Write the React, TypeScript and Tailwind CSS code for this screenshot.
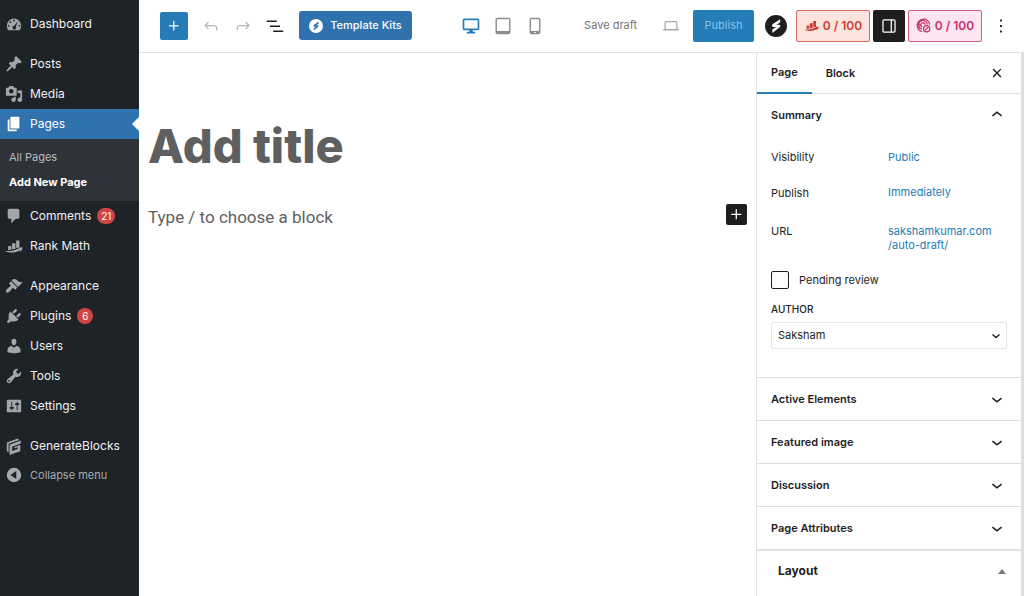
import type { ReactNode } from "react";
import clsx from "clsx";

type IconProps = {
  className?: string;
  children: ReactNode;
  box?: string;
};

function Icon({ className, children, box = "0 0 24 24" }: IconProps) {
  return (
    <svg
      viewBox={box}
      fill="currentColor"
      aria-hidden="true"
      className={clsx("shrink-0", className)}
    >
      {children}
    </svg>
  );
}

const dashicons = {
  dashboard:
    "M3.76 17h12.48A7.96 7.96 0 0 0 18 12a8 8 0 1 0-16 0c0 1.89.66 3.63 1.76 5zM10 5a1 1 0 1 1 0 2 1 1 0 0 1 0-2zM6 7a1 1 0 1 1 0 2 1 1 0 0 1 0-2zm8.600-.3L12 12.800a2 2 0 1 1-1.600-.8zM4 11a1 1 0 1 1 0 2 1 1 0 0 1 0-2zm12 0a1 1 0 1 1 0 2 1 1 0 0 1 0-2z",
  posts:
    "M10.44 3.02l1.82-1.82 6.36 6.35-1.83 1.82c-1.05-.68-2.48-.57-3.41.36l-.75.75c-.92.93-1.04 2.35-.35 3.41l-1.83 1.82-2.41-2.41-2.8 2.79c-.42.42-3.38 2.71-3.8 2.29s1.86-3.39 2.28-3.81l2.79-2.79L4.1 9.36l1.83-1.82c1.05.69 2.48.57 3.4-.36l.75-.75c.93-.92 1.05-2.35.36-3.41z",
  media:
    "M13 11V4c0-.55-.45-1-1-1h-1.67L9 1H5L3.67 3H2c-.55 0-1 .45-1 1v7c0 .55.45 1 1 1h10c.55 0 1-.45 1-1zM7 4.5c1.38 0 2.5 1.12 2.5 2.5S8.38 9.5 7 9.5 4.5 8.38 4.5 7 5.62 4.5 7 4.5zM14 6h5v10.5c0 1.38-1.12 2.5-2.5 2.5S14 17.88 14 16.5s1.12-2.5 2.5-2.5c.17 0 .34.02.5.05V9h-3V6zm-4 8.05V13h2v3.5c0 1.38-1.12 2.5-2.5 2.5S7 17.88 7 16.5 8.12 14 9.5 14c.17 0 .34.02.5.05z",
  pages: "M6 15V2h10v13H6zm-1 1h8v2H3V5h2v11z",
  comments:
    "M5 2h9c1.1 0 2 .9 2 2v7c0 1.1-.9 2-2 2h-2l-5 5v-5H5c-1.1 0-2-.9-2-2V4c0-1.1.9-2 2-2z",
  rankMath:
    "M3.500 10H7v4l-3.500.7zM7.800 7h3.800v6l-3.800 1zM12.400 4H16v7l-3.600 1.500zM0 15.600c6 .4 11-.6 15.200-2.800l-.8-1.300 5.600.2-2.600 4.600-.9-1.300C12 17.600 6 18.200 0 15.600z",
  appearance:
    "M14.48 11.06L7.41 3.99l1.5-1.5c.5-.56 2.3-.47 3.51.32 1.21.8 1.43 1.28 2.91 2.1 1.18.64 2.45 1.26 4.45.85zm-.71.71L6.7 4.7 4.93 6.47c-.39.39-.39 1.02 0 1.41l1.06 1.06c.39.39.39 1.03 0 1.42-.6.6-1.43 1.11-2.21 1.69-.35.26-.7.53-1.01.84C1.43 14.23.4 16.08 1.4 17.07c.99 1 2.84-.03 4.18-1.36.31-.31.58-.66.85-1.02.57-.78 1.08-1.61 1.69-2.21.39-.39 1.02-.39 1.41 0l1.06 1.06c.39.39 1.02.39 1.41 0z",
  plugins:
    "M13.11 4.36L9.87 7.6 8 5.73l3.24-3.24c.35-.34 1.05-.2 1.56.32.52.51.66 1.21.31 1.55zm-8 1.77l.91-1.12 9.01 9.01-1.19.84c-.71.71-2.63 1.16-3.82 1.16H6.14L4.9 17.26c-.59.59-1.54.59-2.12 0-.59-.58-.59-1.53 0-2.12l1.24-1.24v-3.88c0-1.13.4-3.19 1.09-3.89zm7.26 3.97l3.24-3.24c.34-.35 1.04-.21 1.55.31.52.51.66 1.21.31 1.55l-3.24 3.25z",
  users:
    "M10 9.25c-2.27 0-2.73-3.44-2.73-3.44C7 4.02 7.82 2 9.97 2c2.16 0 2.98 2.02 2.71 3.81 0 0-.41 3.44-2.68 3.44zm0 2.57L12.72 10c2.39 0 4.52 2.33 4.52 4.53v2.49s-3.65 1.13-7.24 1.13c-3.65 0-7.24-1.13-7.24-1.13v-2.49c0-2.25 1.94-4.48 4.47-4.48z",
  tools:
    "M16.68 9.77c-1.34 1.34-3.3 1.67-4.95.99l-5.41 6.52c-.99.99-2.59.99-3.58 0s-.99-2.59 0-3.57l6.52-5.42c-.68-1.65-.35-3.61.99-4.95 1.28-1.28 3.12-1.62 4.72-1.06l-2.89 2.89 2.82 2.82 2.86-2.87c.53 1.58.18 3.39-1.08 4.65zM3.81 16.21c.4.39 1.04.39 1.43 0 .4-.4.4-1.04 0-1.43-.39-.4-1.03-.4-1.43 0-.39.39-.39 1.03 0 1.43z",
  settings:
    "M18 16V4c0-.55-.45-1-1-1H3c-.55 0-1 .45-1 1v12c0 .55.45 1 1 1h14c.55 0 1-.45 1-1zM8 11h1c.55 0 1 .45 1 1s-.45 1-1 1H8v1.500c0 .28-.22.5-.5.5s-.5-.22-.5-.5V13H6c-.55 0-1-.45-1-1s.45-1 1-1h1V5.500c0-.28.22-.5.5-.5s.5.22.5.5V11zm5-2h-1c-.55 0-1-.45-1-1s.45-1 1-1h1V5.500c0-.28.22-.5.5-.5s.5.22.5.5V7h1c.55 0 1 .45 1 1s-.45 1-1 1h-1v5.500c0 .28-.22.5-.5.5s-.5-.22-.5-.5V9z",
  generate:
    "M2 6L15 1.500v2L4 7.500V17l-2-1.200zM5 8.500L17.500 4v3.300L8 10.800v4.700l6-2.200v-1.800l-3.500 1.300v-1.600L17 8.800v7L5 20z",
  collapse:
    "M10 2a8 8 0 1 0 0 16 8 8 0 0 0 0-16zm2.500 12.500L6 10l6.500-4.500z",
};

type MenuItem = {
  label: string;
  icon: keyof typeof dashicons;
  count?: number;
  active?: boolean;
  children?: { label: string; current?: boolean }[];
};

const menuGroups: MenuItem[][] = [
  [{ label: "Dashboard", icon: "dashboard" }],
  [
    { label: "Posts", icon: "posts" },
    { label: "Media", icon: "media" },
    {
      label: "Pages",
      icon: "pages",
      active: true,
      children: [
        { label: "All Pages" },
        { label: "Add New Page", current: true },
      ],
    },
    { label: "Comments", icon: "comments", count: 21 },
    { label: "Rank Math", icon: "rankMath" },
  ],
  [
    { label: "Appearance", icon: "appearance" },
    { label: "Plugins", icon: "plugins", count: 6 },
    { label: "Users", icon: "users" },
    { label: "Tools", icon: "tools" },
    { label: "Settings", icon: "settings" },
  ],
];

function MenuIcon({ name }: { name: keyof typeof dashicons }) {
  return (
    <Icon box="0 0 20 20" className="size-[18px]">
      <path fillRule="evenodd" d={dashicons[name]} />
    </Icon>
  );
}

function AdminMenuItem({ item }: { item: MenuItem }) {
  return (
    <li>
      <a
        href="#"
        className={clsx(
          "relative flex h-[30px] items-center gap-[7px] pl-[5px]",
          item.active ? "bg-[#2f72ae] text-white" : "text-[#f0f0f1]",
        )}
      >
        <span className={item.active ? "text-white" : "text-[#a2a6ab]"}>
          <MenuIcon name={item.icon} />
        </span>
        {item.label}
        {item.count ? (
          <span className="-ml-px flex h-4 min-w-4 items-center justify-center rounded-full bg-[#d04543] px-1 text-[10px] text-white">
            {item.count}
          </span>
        ) : null}
        {item.active ? (
          <span className="absolute right-0 border-y-[7px] border-r-[7px] border-y-transparent border-r-white" />
        ) : null}
      </a>
      {item.children ? (
        <ul className="bg-[#2e333a] py-[6px] text-[11px]">
          {item.children.map((child) => (
            <li key={child.label}>
              <a
                href="#"
                className={clsx(
                  "flex h-[25px] items-center pl-[9px]",
                  child.current ? "font-bold text-white" : "text-[#b6babf]",
                )}
              >
                {child.label}
              </a>
            </li>
          ))}
        </ul>
      ) : null}
    </li>
  );
}

function AdminMenu() {
  return (
    <nav
      aria-label="Main menu"
      className="w-[139px] shrink-0 bg-[#1e2328] pt-[9px] text-[12px]"
    >
      <div className="flex flex-col gap-[10px]">
        {menuGroups.map((group) => (
          <ul key={group[0].label}>
            {group.map((item) => (
              <AdminMenuItem key={item.label} item={item} />
            ))}
          </ul>
        ))}
        <ul>
          <AdminMenuItem item={{ label: "GenerateBlocks", icon: "generate" }} />
          <li>
            <button
              type="button"
              className="flex h-[28px] w-full items-center gap-[7px] pl-[5px] text-[11px] text-[#a7aaad]"
            >
              <MenuIcon name="collapse" />
              Collapse menu
            </button>
          </li>
        </ul>
      </div>
    </nav>
  );
}

function StarterLogo({ className }: { className?: string }) {
  return (
    <Icon className={className}>
      <path
        fillRule="evenodd"
        d="M12 0a12 12 0 1 0 0 24 12 12 0 0 0 0-24zm4.500 4.500v3.700l-4.300 2.300h3c1.700 0 2.200 1.700.8 2.800L8 19.500v-3.700l4.200-2.700H9.300c-1.900 0-2.400-2-.8-3.200z"
      />
    </Icon>
  );
}

function EditorHeader() {
  return (
    <header className="flex h-[53px] shrink-0 items-center justify-between border-b border-[#e2e2e2] pr-[13px] pb-px pl-[21px] text-[11px] text-[#1e1e1e]">
      <div className="flex items-center gap-2">
        <button
          type="button"
          aria-label="Toggle block inserter"
          className="flex size-7 items-center justify-center rounded-[2px] bg-[#267cb6] text-white"
        >
          <Icon className="size-5">
            <path d="M11 12.500V17.500H12.500V12.500H17.500V11H12.500V6H11V11H6V12.500H11Z" />
          </Icon>
        </button>
        <button
          type="button"
          aria-label="Undo"
          className="ml-[3px] flex w-6 justify-center text-[#b5b5b5]"
        >
          <Icon className="size-5">
            <path d="M18.300 11.700c-.6-.6-1.400-.9-2.300-.9H6.700l2.900-3.300-1.100-1-4.500 5L8.500 16l1-1-2.700-2.700H16c.5 0 .9.2 1.300.5 1 1 1 3.400 1 4.500v.3h1.500v-.2c0-1.500 0-4.300-1.500-5.700z" />
          </Icon>
        </button>
        <button
          type="button"
          aria-label="Redo"
          className="flex w-6 justify-center text-[#b5b5b5]"
        >
          <Icon className="size-5">
            <path d="M15.600 6.500l-1.100 1 2.900 3.300H8c-.9 0-1.700.3-2.300.9-1.400 1.500-1.400 4.200-1.400 5.600v.2h1.500v-.3c0-1.100 0-3.500 1-4.500.3-.3.7-.5 1.300-.5h9.200L14.500 15l1.100 1.100 4.600-4.600-4.600-5z" />
          </Icon>
        </button>
        <button
          type="button"
          aria-label="Document overview"
          className="flex w-6 justify-center"
        >
          <Icon className="size-[22px]">
            <path d="M3 6h11v1.500H3V6Zm3.500 5.500h11V13h-11v-1.500ZM21 17H10v1.500h11V17Z" />
          </Icon>
        </button>
        <button
          type="button"
          className="ml-1 flex h-[29px] w-[113px] items-center justify-center gap-[7px] rounded-[3px] bg-[#2f72ae] font-medium whitespace-nowrap text-white"
        >
          <StarterLogo className="size-[14px]" />
          Template Kits
        </button>
      </div>

      <div className="ml-[10px] flex items-center gap-3">
        <button type="button" aria-label="Desktop" className="text-[#267cb6]">
          <Icon className="size-5">
            <path
              fillRule="evenodd"
              d="M4 3h16a2 2 0 0 1 2 2v10a2 2 0 0 1-2 2h-6v2h3v2H7v-2h3v-2H4a2 2 0 0 1-2-2V5a2 2 0 0 1 2-2zm0 2v10h16V5z"
            />
          </Icon>
        </button>
        <button type="button" aria-label="Tablet" className="text-[#8c8c8c]">
          <Icon className="size-5">
            <path
              fillRule="evenodd"
              d="M5.500 2h13A2.500 2.500 0 0 1 21 4.500v15a2.500 2.500 0 0 1-2.500 2.500h-13A2.500 2.500 0 0 1 3 19.500v-15A2.500 2.500 0 0 1 5.500 2zm-.8 2v14h14.600V4z"
            />
          </Icon>
        </button>
        <button type="button" aria-label="Mobile" className="text-[#8c8c8c]">
          <Icon className="size-5">
            <path
              fillRule="evenodd"
              d="M8 2h8a2.500 2.500 0 0 1 2.500 2.500v15A2.500 2.500 0 0 1 16 22H8a2.500 2.500 0 0 1-2.500-2.500v-15A2.500 2.500 0 0 1 8 2zm-.8 2v14h9.600V4zM11 19.200v1.200h2v-1.200z"
            />
          </Icon>
        </button>
      </div>

      <div className="flex items-center gap-[3px]">
        <button
          type="button"
          className="mr-[21px] whitespace-nowrap text-[#757575]"
        >
          Save draft
        </button>
        <button
          type="button"
          aria-label="Preview"
          className="mr-[9px] text-[#a8a8a8]"
        >
          <Icon className="size-5">
            <path
              fillRule="evenodd"
              d="M20.500 16h-.7V8c0-1.100-.9-2-2-2H6.200c-1.100 0-2 .9-2 2v8h-.7c-.8 0-1.500.7-1.500 1.500h20c0-.8-.7-1.500-1.500-1.500zM5.700 8c0-.3.2-.5.5-.5h11.600c.3 0 .5.2.5.5v7.600H5.700V8z"
            />
          </Icon>
        </button>
        <button
          type="button"
          className="h-8 w-[61px] rounded-[2px] bg-[#267cb6] text-[#84c0e8]"
        >
          Publish
        </button>
        <button
          type="button"
          aria-label="Starter templates"
          className="mr-[6px] ml-2"
        >
          <StarterLogo className="size-[22px]" />
        </button>
        <button
          type="button"
          className="flex h-8 w-[74px] items-center justify-center gap-1 rounded-[2px] border border-[#cf6a67] bg-[#fde3de] text-[12px] font-semibold whitespace-nowrap text-[#c93b35]"
        >
          <Icon box="0 0 20 20" className="size-[15px]">
            <path d={dashicons.rankMath} />
          </Icon>
          0 / 100
        </button>
        <button
          type="button"
          aria-label="Settings"
          className="flex h-8 w-8 items-center justify-center rounded-[2px] bg-[#1e1e1e] text-white"
        >
          <Icon className="size-5">
            <path
              fillRule="evenodd"
              d="M18 4H6c-1.100 0-2 .9-2 2v12c0 1.100.9 2 2 2h12c1.100 0 2-.9 2-2V6c0-1.100-.9-2-2-2zm-4 14.500H6c-.3 0-.5-.2-.5-.5V6c0-.3.2-.5.5-.5h8v13zm4.500-.5c0 .3-.2.5-.5.5h-2.500v-13H18c.3 0 .5.2.5.5v12z"
            />
          </Icon>
        </button>
        <button
          type="button"
          className="flex h-8 w-[74px] items-center justify-center gap-1 rounded-[2px] border border-[#c9608d] bg-[#fde5f1] text-[12px] font-semibold whitespace-nowrap text-[#c62f6d]"
        >
          <svg
            viewBox="0 0 24 24"
            fill="none"
            stroke="currentColor"
            strokeWidth="2"
            strokeLinecap="round"
            aria-hidden="true"
            className="size-[15px] shrink-0"
          >
            <path d="M9 21.500A10 10 0 1 1 21.800 10M8.500 17.500A7 7 0 1 1 18 9.500M9 14a3.500 3.500 0 1 1 5.500-4M2 11h5M3 16h4" />
            <circle cx="17" cy="17" r="5" />
            <path d="M15 19l4-4" />
          </svg>
          0 / 100
        </button>
        <button
          type="button"
          aria-label="Options"
          className="ml-[6px] flex w-5 justify-center"
        >
          <Icon className="size-[22px]">
            <path d="M13 19h-2v-2h2v2zm0-6h-2v-2h2v2zm0-6h-2V5h2v2z" />
          </Icon>
        </button>
      </div>
    </header>
  );
}

function Chevron({ up }: { up?: boolean }) {
  return (
    <Icon className="size-[22px]">
      <path
        d={
          up
            ? "M6.500 12.400L12 8l5.500 4.400-.9 1.200L12 10l-4.500 3.600-1-1.200z"
            : "M17.500 11.600L12 16l-5.500-4.400.9-1.200L12 14l4.500-3.600 1 1.200z"
        }
      />
    </Icon>
  );
}

function PanelToggle({ label, open }: { label: string; open?: boolean }) {
  return (
    <button
      type="button"
      aria-expanded={Boolean(open)}
      className="flex h-[42px] w-full items-center justify-between pr-[13px] pl-[14px] font-semibold"
    >
      {label}
      <Chevron up={open} />
    </button>
  );
}

const closedPanels = [
  "Active Elements",
  "Featured image",
  "Discussion",
  "Page Attributes",
];

function SettingsSidebar() {
  return (
    <aside className="w-[268px] shrink-0 overflow-hidden border-r-[3px] border-l border-r-[#dedede] border-l-[#e2e2e2] text-[11px] text-[#1e1e1e]">
      <div className="flex h-[41px] items-center justify-between border-b border-[#e2e2e2] pr-[13px]">
        <div role="tablist" className="flex h-full font-semibold">
          <button
            type="button"
            role="tab"
            aria-selected="true"
            className="-mb-px border-b-2 border-[#267cb6] px-[14px]"
          >
            Page
          </button>
          <button
            type="button"
            role="tab"
            aria-selected="false"
            className="px-[14px]"
          >
            Block
          </button>
        </div>
        <button type="button" aria-label="Close settings">
          <Icon className="size-[22px]">
            <path d="M12 13.060l3.712 3.713 1.061-1.060L13.061 12l3.712-3.712-1.060-1.060L12 10.938 8.288 7.227l-1.061 1.060L10.939 12l-3.712 3.712 1.060 1.061L12 13.061z" />
          </Icon>
        </button>
      </div>

      <section className="pb-7">
        <PanelToggle label="Summary" open />
        <div className="px-[14px]">
          <dl className="grid grid-cols-[117px_1fr] leading-[14px]">
            <dt className="py-[14px]">Visibility</dt>
            <dd className="py-[14px]">
              <button type="button" className="text-[#267cb6]">
                Public
              </button>
            </dd>
            <dt className="py-2">Publish</dt>
            <dd className="py-[7px]">
              <button type="button" className="text-[#267cb6]">
                Immediately
              </button>
            </dd>
            <dt className="pt-4">URL</dt>
            <dd className="pt-4">
              <a href="#" className="block text-[#267cb6]">
                sakshamkumar.com
                <br />
                /auto-draft/
              </a>
            </dd>
          </dl>
          <label className="mt-[19px] flex h-[18px] items-center gap-[10px]">
            <input
              type="checkbox"
              className="size-[18px] appearance-none rounded-[2px] border border-[#1e1e1e] bg-white"
            />
            Pending review
          </label>
          <label
            htmlFor="author"
            className="mt-[13px] block text-[10px] leading-[14px] font-medium"
          >
            AUTHOR
          </label>
          <div className="relative mt-[6px] flex items-center">
            <select
              id="author"
              className="h-[27px] w-full appearance-none rounded-[2px] border border-[#e6e6e6] bg-white px-[6px]"
            >
              <option>Saksham</option>
            </select>
            <svg
              viewBox="0 0 10 10"
              fill="none"
              stroke="currentColor"
              strokeWidth="1.4"
              aria-hidden="true"
              className="pointer-events-none absolute right-[6px] size-[10px]"
            >
              <path d="M1.500 3.500L5 6.500l3.500-3" />
            </svg>
          </div>
        </div>
      </section>

      {closedPanels.map((label) => (
        <section key={label} className="border-t border-[#dedede]">
          <PanelToggle label={label} />
        </section>
      ))}

      <section className="border-t-2 border-[#e0e0e0]">
        <button
          type="button"
          aria-expanded="true"
          className="flex h-10 w-full items-center justify-between pr-[15px] pl-[21px] text-[12px] font-bold"
        >
          Layout
          <span className="border-x-4 border-b-[5px] border-x-transparent border-b-[#787c82]" />
        </button>
      </section>
    </aside>
  );
}

function EditorCanvas() {
  return (
    <main className="min-w-0 flex-1 px-[9px] pt-[63px] text-[#5f5f5f]">
      <input
        type="text"
        aria-label="Add title"
        placeholder="Add title"
        className="block h-[60px] w-full text-[47px] font-extrabold outline-none placeholder:text-[#5f5f5f]"
      />
      <div className="mt-7 flex items-start justify-between">
        <input
          type="text"
          aria-label="Add default block"
          placeholder="Type / to choose a block"
          className="h-[26px] min-w-0 flex-1 font-['Roboto','Liberation_Sans',sans-serif] text-[17px] outline-none placeholder:text-[#5f5f5f]"
        />
        <button
          type="button"
          aria-label="Add block"
          className="flex size-[21px] items-center justify-center rounded-[2px] bg-[#1e1e1e] text-white"
        >
          <Icon className="size-[21px]">
            <path d="M11 12.500V17.500H12.500V12.500H17.500V11H12.500V6H11V11H6V12.500H11Z" />
          </Icon>
        </button>
      </div>
    </main>
  );
}

export default function App() {
  return (
    <div className="flex h-screen overflow-hidden bg-white font-['Inter','Liberation_Sans',sans-serif]">
      <AdminMenu />
      <div className="flex min-w-0 flex-1 flex-col">
        <EditorHeader />
        <div className="flex min-h-0 flex-1">
          <EditorCanvas />
          <SettingsSidebar />
        </div>
      </div>
    </div>
  );
}
